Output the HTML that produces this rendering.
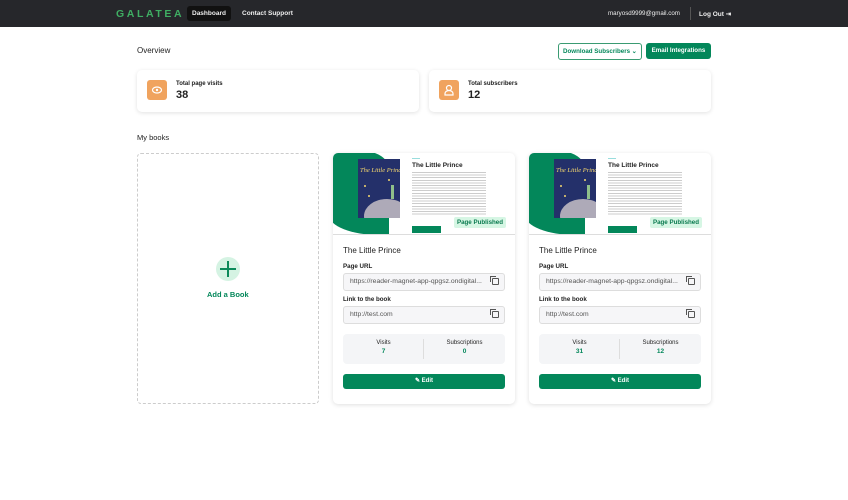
<!DOCTYPE html>
<html><head><meta charset="utf-8">
<style>
*{box-sizing:border-box;margin:0;padding:0}
body{width:848px;height:500px;background:#fff;font-family:"Liberation Sans",Arial,sans-serif;color:#222;position:relative;overflow:hidden}
.abs{position:absolute}
.hdr{left:0;top:0;width:848px;height:27px;background:#26272b}
.logo{left:116px;top:8px;color:#3fae63;font-size:10.5px;letter-spacing:2.6px;font-weight:bold}
.nav{top:6px;height:15px;font-size:6.5px;color:#eee;font-weight:bold;line-height:15px;padding:0 5px;border-radius:3px}
.stat{top:70px;height:42px;background:#fff;border-radius:5px;box-shadow:0 1px 4px rgba(0,0,0,.12)}
.ico{left:10px;top:10px;width:20px;height:20px;border-radius:3px;background:#f0a35e}
.st1{left:39px;top:11px;font-size:6px;font-weight:bold}
.st2{left:39px;top:19px;font-size:11px;font-weight:bold}
.card{top:153px;width:182px;height:251px;background:#fff;border-radius:5px;box-shadow:0 1px 5px rgba(0,0,0,.13);overflow:hidden}
.blob{left:-4px;top:-2px;width:60px;height:84px;background:#03875a;border-radius:0 26px 0 50px/0 18px 0 20px}
.cover{left:25px;top:6px;width:42px;height:59px;background:#24306a;overflow:hidden}
.cover i{position:absolute;width:2px;height:2px;background:#f5d76e;border-radius:50%}
.planet{left:6px;top:40px;width:46px;height:34px;border-radius:50%;background:#aeaab8}
.lbl{left:10px;font-size:6.2px;font-weight:bold}
.inp{left:10px;width:162px;height:18px;border:1px solid #ddd;border-radius:3px;background:#f6f6f8;font-size:6.8px;color:#555;line-height:16px;padding-left:6px}
.cp{right:5px;top:4px;width:7px;height:7px;border:1px solid #555;border-radius:1px}
.cp:after{content:"";position:absolute;left:-3px;top:-3px;width:5px;height:5px;border-left:1px solid #555;border-top:1px solid #555}
.sbox{left:10px;top:181px;width:162px;height:30px;background:#f4f5f7;border-radius:4px}
.edit{left:10px;top:221px;width:162px;height:15px;background:#03875a;border-radius:3px;color:#fff;font-size:6px;font-weight:bold;text-align:center;line-height:15px}
.line{height:2px;background:#ddd;left:0}
</style></head><body>
<div class="abs hdr"></div>
<div class="abs logo">GALATEA</div>
<div class="abs nav" style="left:187px;background:#111">Dashboard</div>
<div class="abs nav" style="left:237px">Contact Support</div>
<div class="abs" style="left:608px;top:10px;font-size:6.2px;color:#eee">maryosd9999@gmail.com</div>
<div class="abs" style="left:690px;top:7px;width:1px;height:13px;background:#555"></div>
<div class="abs" style="left:699px;top:10px;font-size:6.5px;color:#eee;font-weight:bold">Log Out ⇥</div>

<div class="abs" style="left:137px;top:46px;font-size:8px">Overview</div>
<div class="abs" style="left:558px;top:43px;width:84px;height:17px;border:1px solid #3a9b72;border-radius:3px;font-size:6.2px;color:#03875a;font-weight:bold;text-align:center;line-height:15px">Download Subscribers ⌄</div>
<div class="abs" style="left:646px;top:43px;width:65px;height:16px;background:#03875a;border-radius:3px;font-size:6.2px;color:#fff;font-weight:bold;text-align:center;line-height:16px">Email Integrations</div>

<div class="abs stat" style="left:137px;width:282px"><div class="abs ico"><svg width="20" height="20"><ellipse cx="10" cy="10" rx="4.5" ry="3" fill="none" stroke="#fff" stroke-width="1.2"/><circle cx="10" cy="10" r="1.2" fill="#fff"/></svg></div><div class="abs st1">Total page visits</div><div class="abs st2">38</div></div>
<div class="abs stat" style="left:429px;width:282px"><div class="abs ico"><svg width="20" height="20"><circle cx="10" cy="8" r="2.5" fill="none" stroke="#fff" stroke-width="1.2"/><path d="M6 15v-1.5a4 3 0 0 1 8 0V15z" fill="none" stroke="#fff" stroke-width="1.2"/></svg></div><div class="abs st1">Total subscribers</div><div class="abs st2">12</div></div>

<div class="abs" style="left:137px;top:133px;font-size:7.5px">My books</div>

<div class="abs" style="left:137px;top:153px;width:182px;height:251px;border:1px dashed #ccc;border-radius:4px"></div>
<div class="abs" style="left:216px;top:257px;width:24px;height:24px;border-radius:50%;background:#d5f3e3"></div>
<div class="abs" style="left:227px;top:261px;width:2px;height:16px;background:#0c8a5a"></div>
<div class="abs" style="left:220px;top:268px;width:16px;height:2px;background:#0c8a5a"></div>
<div class="abs" style="left:207px;top:290px;font-size:7.5px;font-weight:bold;color:#03875a">Add a Book</div>

<!-- card 1 -->
<div class="abs card" style="left:333px">
 <div class="abs blob"></div>
 <div class="abs cover"><div class="abs" style="left:2px;top:8px;font-size:6.5px;white-space:nowrap;color:#f5d76e;font-style:italic;font-family:'Liberation Serif',serif">The Little Prince</div><div class="abs planet"></div><i style="left:6px;top:26px"></i><i style="left:30px;top:20px"></i><i style="left:10px;top:36px"></i><div class="abs" style="left:33px;top:26px;width:3px;height:14px;background:#8fbf8a"></div></div>
 <div class="abs" style="left:79px;top:5px;width:8px;height:1px;background:#9dd"></div>
 <div class="abs" style="left:79px;top:9px;font-size:6.5px;font-weight:bold">The Little Prince</div>
 <div class="abs" style="left:79px;top:19px;width:74px;height:44px;background:repeating-linear-gradient(#ccc 0 1px,transparent 1px 2.6px)"></div>
 <div class="abs" style="left:79px;top:73px;width:29px;height:7px;background:#03875a"></div>
 <div class="abs" style="left:121px;top:64px;width:52px;height:11px;background:#d6f6e4;border-radius:2px;font-size:6.2px;color:#0a7a4f;font-weight:bold;text-align:center;line-height:11px">Page Published</div>
 <div class="abs line" style="top:81px;width:182px;height:1px"></div>
 <div class="abs" style="left:10px;top:93px;font-size:8px">The Little Prince</div>
 <div class="abs lbl" style="top:110px">Page URL</div>
 <div class="abs inp" style="top:120px">https://reader-magnet-app-qpgsz.ondigital...<div class="abs cp"></div></div>
 <div class="abs lbl" style="top:143px">Link to the book</div>
 <div class="abs inp" style="top:153px">http://test.com<div class="abs cp"></div></div>
 <div class="abs sbox"><div class="abs" style="left:0;width:81px;top:6px;text-align:center;font-size:6px">Visits<br><b style="color:#03875a;font-size:6.5px;line-height:11px">7</b></div><div class="abs" style="left:80px;top:5px;width:1px;height:20px;background:#ddd"></div><div class="abs" style="left:81px;width:81px;top:6px;text-align:center;font-size:6px">Subscriptions<br><b style="color:#03875a;font-size:6.5px;line-height:11px">0</b></div></div>
 <div class="abs edit">✎ Edit</div>
</div>

<!-- card 2 -->
<div class="abs card" style="left:529px">
 <div class="abs blob"></div>
 <div class="abs cover"><div class="abs" style="left:2px;top:8px;font-size:6.5px;white-space:nowrap;color:#f5d76e;font-style:italic;font-family:'Liberation Serif',serif">The Little Prince</div><div class="abs planet"></div><i style="left:6px;top:26px"></i><i style="left:30px;top:20px"></i><i style="left:10px;top:36px"></i><div class="abs" style="left:33px;top:26px;width:3px;height:14px;background:#8fbf8a"></div></div>
 <div class="abs" style="left:79px;top:5px;width:8px;height:1px;background:#9dd"></div>
 <div class="abs" style="left:79px;top:9px;font-size:6.5px;font-weight:bold">The Little Prince</div>
 <div class="abs" style="left:79px;top:19px;width:74px;height:44px;background:repeating-linear-gradient(#ccc 0 1px,transparent 1px 2.6px)"></div>
 <div class="abs" style="left:79px;top:73px;width:29px;height:7px;background:#03875a"></div>
 <div class="abs" style="left:121px;top:64px;width:52px;height:11px;background:#d6f6e4;border-radius:2px;font-size:6.2px;color:#0a7a4f;font-weight:bold;text-align:center;line-height:11px">Page Published</div>
 <div class="abs line" style="top:81px;width:182px;height:1px"></div>
 <div class="abs" style="left:10px;top:93px;font-size:8px">The Little Prince</div>
 <div class="abs lbl" style="top:110px">Page URL</div>
 <div class="abs inp" style="top:120px">https://reader-magnet-app-qpgsz.ondigital...<div class="abs cp"></div></div>
 <div class="abs lbl" style="top:143px">Link to the book</div>
 <div class="abs inp" style="top:153px">http://test.com<div class="abs cp"></div></div>
 <div class="abs sbox"><div class="abs" style="left:0;width:81px;top:6px;text-align:center;font-size:6px">Visits<br><b style="color:#03875a;font-size:6.5px;line-height:11px">31</b></div><div class="abs" style="left:80px;top:5px;width:1px;height:20px;background:#ddd"></div><div class="abs" style="left:81px;width:81px;top:6px;text-align:center;font-size:6px">Subscriptions<br><b style="color:#03875a;font-size:6.5px;line-height:11px">12</b></div></div>
 <div class="abs edit">✎ Edit</div>
</div>
</body></html>
